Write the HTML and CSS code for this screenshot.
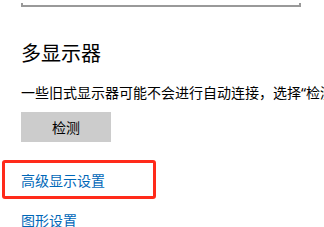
FILE: index.html
```html
<!DOCTYPE html>
<html lang="zh-CN">
<head>
    <meta charset="UTF-8">
    <meta name="viewport" content="width=device-width, initial-scale=1.0">
    <title>显示设置</title>
    <link rel="stylesheet" href="styles.css">
</head>
<body>
    <div class="page">
        <div class="select-box"></div>
        <h2 class="section-title">多显示器</h2>
        <p class="desc">一些旧式显示器可能不会进行自动连接，选择“检测”即可尝试连接。</p>
        <button class="btn" type="button">检测</button>
        <a class="link link-first" href="#">高级显示设置</a>
        <a class="link" href="#">图形设置</a>
    </div>
    <div class="highlight"></div>
</body>
</html>
```

FILE: styles.css
```css
html, body {
    margin: 0;
    padding: 0;
    background: #fff;
    overflow: hidden;
}

body {
    font-family: "Noto Sans CJK SC", "Noto Sans", sans-serif;
    color: #000;
    position: relative;
    height: 227px;
}

.page {
    padding-left: 21px;
    display: flex;
    flex-direction: column;
    align-items: flex-start;
}

.select-box {
    margin-top: 3px;
    width: 276px;
    height: 2px;
    border: 2px solid #999;
    border-top: 0;
}

.section-title {
    margin: 32px 0 0;
    font-size: 20px;
    line-height: 28px;
    font-weight: normal;
}

.desc {
    margin: 16px 0 0;
    font-family: "Noto Sans", "Noto Sans CJK SC", sans-serif;
    font-size: 14px;
    line-height: 20px;
    white-space: nowrap;
}

.btn {
    margin-top: 9px;
    width: 90px;
    height: 30px;
    border: none;
    background-color: #ccc;
    color: #000;
    font-family: inherit;
    font-size: 14px;
    padding: 0;
}

.link {
    font-size: 14px;
    line-height: 20px;
    color: #0067b8;
    text-decoration: none;
    margin-top: 20px;
}

.link-first {
    margin-top: 28px;
}

/* 红色标注框 */
.highlight {
    position: absolute;
    left: 2px;
    top: 160px;
    width: 148px;
    height: 33px;
    border: 3px solid #ff2a1a;
    border-radius: 3px;
}
```
